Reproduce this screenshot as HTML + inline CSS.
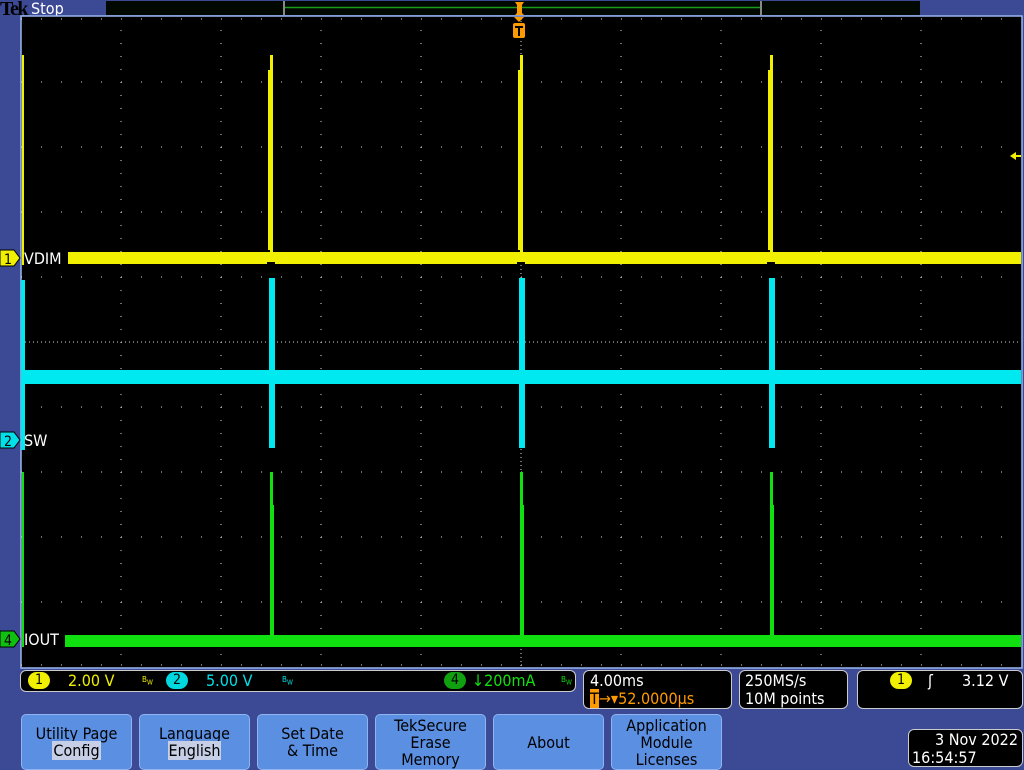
<!DOCTYPE html>
<html><head><meta charset="utf-8"><style>
body{margin:0;width:1024px;height:768px;overflow:hidden;background:#3c4a95;font-family:"DejaVu Sans Condensed","DejaVu Sans","Liberation Sans",sans-serif;}
svg{position:absolute;left:0;top:0}
.btn{position:absolute;top:714px;width:111px;height:56px;background:#5b8fe2;border:1px solid #8fb4f0;border-radius:5px;box-sizing:border-box;color:#000;font-size:16px;line-height:17px;text-align:center;display:flex;flex-direction:column;justify-content:center}
.hl{background:#c6cfe6;padding:0 1px}
.box{position:absolute;background:#000;border:1px solid #ccc;border-radius:6px;box-sizing:border-box;color:#fff;font-size:16px;line-height:18px}
</style></head><body>
<svg width="1024" height="768" xmlns="http://www.w3.org/2000/svg">
<rect x="0" y="0" width="1024" height="768" fill="#3c4a95"/>
<rect x="106" y="1" width="814" height="14" fill="#000800"/>
<line x1="284" y1="7.5" x2="761" y2="7.5" stroke="#1a9a1a" stroke-width="1.5"/>
<rect x="283" y="1" width="2" height="14" fill="#888"/>
<rect x="760" y="1" width="2" height="14" fill="#888"/>
<text x="0" y="15" font-family="Liberation Serif,serif" font-size="20" font-weight="bold" fill="#000" letter-spacing="-1.5">Tek</text>
<text x="31" y="14" font-size="16" fill="#fff">Stop</text>
<rect x="21" y="16" width="1001" height="652" fill="#000" stroke="#9ab8f0" stroke-width="1.5"/>
<g stroke="#ddd" stroke-width="1" stroke-dasharray="1 3">
<line x1="21" y1="342" x2="1021" y2="342"/>
<line x1="521" y1="17" x2="521" y2="667"/>
</g>
<g stroke="#ddd" stroke-width="1" stroke-dasharray="1 19">
<line x1="21" y1="82" x2="1021" y2="82"/><line x1="21" y1="147" x2="1021" y2="147"/><line x1="21" y1="212" x2="1021" y2="212"/><line x1="21" y1="277" x2="1021" y2="277"/><line x1="21" y1="407" x2="1021" y2="407"/><line x1="21" y1="472" x2="1021" y2="472"/><line x1="21" y1="537" x2="1021" y2="537"/><line x1="21" y1="602" x2="1021" y2="602"/>
<line x1="21" y1="19" x2="1021" y2="19"/><line x1="21" y1="665" x2="1021" y2="665"/>
</g>
<g stroke="#ddd" stroke-width="1" stroke-dasharray="1 12">
<line x1="121" y1="30" x2="121" y2="667"/><line x1="221" y1="30" x2="221" y2="667"/><line x1="321" y1="30" x2="321" y2="667"/><line x1="421" y1="30" x2="421" y2="667"/><line x1="621" y1="30" x2="621" y2="667"/><line x1="721" y1="30" x2="721" y2="667"/><line x1="821" y1="30" x2="821" y2="667"/><line x1="921" y1="30" x2="921" y2="667"/>
</g>
<g fill="#f0f000">
<rect x="68" y="252" width="953" height="12"/>
<rect x="22" y="55" width="2" height="210"/>
<rect x="270" y="55" width="3" height="200"/><rect x="268" y="70" width="2" height="180"/>
<rect x="520" y="55" width="3" height="200"/><rect x="518" y="70" width="2" height="180"/>
<rect x="770" y="55" width="3" height="200"/><rect x="768" y="70" width="2" height="180"/>
<path d="M1010 156 l6 -4 v8z M1014 155h7v2h-7z"/>
</g>
<g fill="#000"><rect x="267" y="262" width="8" height="3"/><rect x="517" y="262" width="8" height="3"/><rect x="767" y="262" width="8" height="3"/></g>
<g fill="#00e8f0">
<rect x="24" y="370" width="997" height="14"/>
<rect x="21" y="280" width="4" height="170"/>
<rect x="269" y="278" width="6" height="170"/>
<rect x="519" y="278" width="6" height="170"/>
<rect x="769" y="278" width="6" height="170"/>
</g>
<g fill="#10e010">
<rect x="65" y="635" width="956" height="12"/>
<rect x="22" y="472" width="2" height="175"/>
<rect x="270" y="472" width="3" height="165"/><rect x="272" y="505" width="2" height="140"/>
<rect x="520" y="472" width="3" height="165"/><rect x="522" y="505" width="2" height="140"/>
<rect x="770" y="472" width="3" height="165"/><rect x="772" y="505" width="2" height="140"/>
</g>
<path d="M515 2h9l-2 3v8l2 2h-9l2-2v-8z" fill="#ff9a00"/>
<path d="M514 17h10l-5 5z" fill="#ff9a00"/>
<rect x="513" y="23" width="12" height="15" rx="2" fill="#ff9a00"/>
<path d="M515 26h8v2h-3v8h-2v-8h-3z" fill="#000"/>
<path d="M0 250h14l6 8l-6 8h-14z" fill="#f0f000" stroke="#000"/><text x="4" y="264" font-size="14" fill="#000">1</text>
<path d="M0 432h14l6 8l-6 8h-14z" fill="#00e0e8" stroke="#000"/><text x="4" y="446" font-size="14" fill="#000">2</text>
<path d="M0 631h14l6 8l-6 8h-14z" fill="#10c010" stroke="#000"/><text x="4" y="645" font-size="14" fill="#000">4</text>
<text x="24" y="264" font-size="16" fill="#fff">VDIM</text>
<text x="24" y="446" font-size="16" fill="#fff">SW</text>
<text x="24" y="645" font-size="16" fill="#fff">IOUT</text>
</svg>
<div class="box" style="left:20px;top:670px;width:556px;height:22px;"></div>
<div style="position:absolute;left:28px;top:672px;width:22px;height:17px;border-radius:9px;background:#f0f000;color:#000;font-size:14px;text-align:center;line-height:17px">1</div>
<div style="position:absolute;left:68px;top:671px;color:#f0f000;font-size:16px">2.00 V</div>
<div style="position:absolute;left:142px;top:675px;color:#f0f000;font-size:8px">B<sub>W</sub></div>
<div style="position:absolute;left:166px;top:672px;width:22px;height:17px;border-radius:9px;background:#00d8e0;color:#000;font-size:14px;text-align:center;line-height:17px">2</div>
<div style="position:absolute;left:206px;top:671px;color:#00e0e8;font-size:16px">5.00 V</div>
<div style="position:absolute;left:282px;top:675px;color:#00e0e8;font-size:8px">B<sub>W</sub></div>
<div style="position:absolute;left:444px;top:672px;width:22px;height:17px;border-radius:9px;background:#10a010;color:#000;font-size:14px;text-align:center;line-height:17px">4</div>
<div style="position:absolute;left:472px;top:671px;color:#10e010;font-size:16px">↓200mA</div>
<div style="position:absolute;left:561px;top:675px;color:#10e010;font-size:8px">B<sub>W</sub></div>
<div class="box" style="left:583px;top:670px;width:149px;height:39px;padding:1px 0 0 6px">4.00ms<br><span style="color:#ff9a00"><span style="background:#ff9a00;color:#000">T</span>→▾52.0000µs</span></div>
<div class="box" style="left:739px;top:670px;width:109px;height:39px;padding:1px 0 0 5px">250MS/s<br>10M points</div>
<div class="box" style="left:857px;top:670px;width:166px;height:39px;"></div>
<div style="position:absolute;left:890px;top:672px;width:22px;height:17px;border-radius:9px;background:#f0f000;color:#000;font-size:14px;text-align:center;line-height:17px">1</div>
<div style="position:absolute;left:928px;top:671px;color:#fff;font-size:16px">ʃ</div>
<div style="position:absolute;left:962px;top:671px;color:#fff;font-size:16px">3.12 V</div>
<div class="btn" style="left:21px"><div>Utility Page</div><div><span class="hl">Config</span></div></div>
<div class="btn" style="left:139px"><div>Language</div><div><span class="hl">English</span></div></div>
<div class="btn" style="left:257px"><div>Set Date</div><div>&amp; Time</div></div>
<div class="btn" style="left:375px"><div>TekSecure</div><div>Erase</div><div>Memory</div></div>
<div class="btn" style="left:493px"><div>About</div></div>
<div class="btn" style="left:611px"><div>Application</div><div>Module</div><div>Licenses</div></div>
<div class="box" style="left:908px;top:729px;width:115px;height:38px;text-align:right;padding:1px 4px 0 0;font-size:16px">3 Nov 2022<br><span style="float:left;padding-left:3px">16:54:57</span></div>
</body></html>
